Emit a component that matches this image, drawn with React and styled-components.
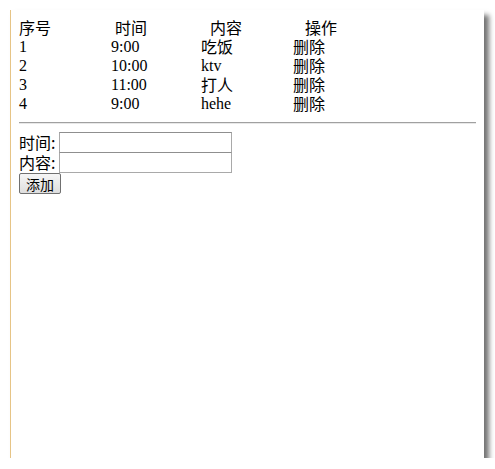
import React from 'react';
import styled, { createGlobalStyle } from 'styled-components';

const GlobalStyle = createGlobalStyle`
  html, body {
    margin: 0;
    padding: 0;
    background: #ffffff;
  }
  body {
    font-family: "Liberation Serif", "Noto Sans CJK SC", serif;
    font-size: 16px;
    color: #000;
  }
`;

const rows = [
  { id: 1, time: '9:00', content: '吃饭' },
  { id: 2, time: '10:00', content: 'ktv' },
  { id: 3, time: '11:00', content: '打人' },
  { id: 4, time: '9:00', content: 'hehe' },
];

function App() {
  return (
    <>
      <GlobalStyle />
      <Window>
        <List>
          <Row $cols="96px 95px 95px auto">
            <Cell $cjk>序号</Cell>
            <Cell $cjk>时间</Cell>
            <Cell $cjk>内容</Cell>
            <Cell $cjk>操作</Cell>
          </Row>
          {rows.map((r) => (
            <Row key={r.id} $cols="92px 90px 92px auto">
              <Cell>{r.id}</Cell>
              <Cell>{r.time}</Cell>
              <Cell $cjk={/[^\x00-\x7f]/.test(r.content)}>{r.content}</Cell>
              <Cell $cjk>删除</Cell>
            </Row>
          ))}
        </List>

        <Divider />

        <Form>
          <Field>
            <Label>时间:</Label>
            <Input type="text" />
          </Field>
          <Field>
            <Label>内容:</Label>
            <Input type="text" />
          </Field>
          <AddButton type="button">添加</AddButton>
        </Form>
      </Window>
    </>
  );
}

const Window = styled.div`
  box-sizing: border-box;
  margin: 10px 0 0 10px;
  width: 474px;
  height: 448px;
  background: #fff;
  border-left: 1px solid #e6c486;
  box-shadow: 5px 5px 5px rgba(0, 0, 0, 0.55);
  padding: 8px 8px 0 8px;
`;

const List = styled.div`
  display: flex;
  flex-direction: column;
`;

const Row = styled.div`
  display: grid;
  grid-template-columns: ${({ $cols }) => $cols};
  height: 19px;
  line-height: 19px;
`;

const Cell = styled.span`
  white-space: nowrap;
  font-family: ${({ $cjk }) =>
    $cjk ? '"Noto Sans CJK SC", sans-serif' : '"Liberation Serif", serif'};
  font-size: 16px;
`;

const Divider = styled.hr`
  margin: 9px 0 0 0;
  width: 457px;
  border: none;
  border-top: 1px solid #a0a0a0;
  border-bottom: 1px solid #e8e8e8;
`;

const Form = styled.div`
  display: flex;
  flex-direction: column;
  align-items: flex-start;
  margin-top: 8px;
`;

const Field = styled.div`
  display: flex;
  align-items: center;
  height: 21px;
  margin-bottom: -1px;
`;

const Label = styled.span`
  font-family: "Noto Sans CJK SC", sans-serif;
  font-size: 16px;
  width: 40px;
  line-height: 19px;
`;

const Input = styled.input`
  box-sizing: border-box;
  width: 173px;
  height: 21px;
  margin: 0;
  border: 1px solid #a9a9a9;
  border-top-color: #8f8f8f;
  background: #fff;
  padding: 1px 2px;
  font-size: 13px;
`;

const AddButton = styled.button`
  box-sizing: border-box;
  margin-top: 1px;
  width: 42px;
  height: 21px;
  padding: 0;
  border: 1px solid #707070;
  border-radius: 2px;
  background: linear-gradient(#f6f6f6, #dedede);
  font-family: "Noto Sans CJK SC", sans-serif;
  font-size: 14px;
  line-height: 18px;
  color: #000;
`;

export default App;
